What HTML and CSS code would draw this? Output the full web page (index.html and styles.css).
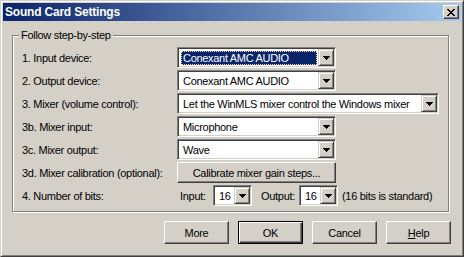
FILE: index.html
```html
<!DOCTYPE html>
<html lang="en">

<head>
    <meta charset="UTF-8">
    <title>Sound Card Settings</title>
    <link rel="stylesheet" href="styles.css">
</head>

<body>
    <div class="window">
        <!-- Caption -->
        <div class="titlebar">
            <span class="title">Sound Card Settings</span>
            <div class="close-btn">
                <svg width="8" height="7" viewBox="0 0 8 7" shape-rendering="crispEdges">
                    <path d="M0 0h2v1H0z M6 0h2v1H6z M1 1h2v1H1z M5 1h2v1H5z M2 2h4v1H2z M3 3h2v1H3z M2 4h4v1H2z M1 5h2v1H1z M5 5h2v1H5z M0 6h2v1H0z M6 6h2v1H6z" fill="#000" />
                </svg>
            </div>
        </div>

        <div class="client">
            <!-- Group box -->
            <div class="group">
                <span class="group-legend">Follow step-by-step</span>

                <div class="row">
                    <span class="label">1. Input device:</span>
                    <div class="combo combo-medium">
                        <span class="combo-text selected">Conexant AMC AUDIO</span>
                        <span class="drop"><svg width="7" height="4" viewBox="0 0 7 4" shape-rendering="crispEdges"><path d="M0 0h7v1H0z M1 1h5v1H1z M2 2h3v1H2z M3 3h1v1H3z" fill="#000" /></svg></span>
                    </div>
                </div>

                <div class="row">
                    <span class="label">2. Output device:</span>
                    <div class="combo combo-medium">
                        <span class="combo-text">Conexant AMC AUDIO</span>
                        <span class="drop"><svg width="7" height="4" viewBox="0 0 7 4" shape-rendering="crispEdges"><path d="M0 0h7v1H0z M1 1h5v1H1z M2 2h3v1H2z M3 3h1v1H3z" fill="#000" /></svg></span>
                    </div>
                </div>

                <div class="row">
                    <span class="label">3. Mixer (volume control):</span>
                    <div class="combo combo-long">
                        <span class="combo-text">Let the WinMLS mixer control the Windows mixer</span>
                        <span class="drop"><svg width="7" height="4" viewBox="0 0 7 4" shape-rendering="crispEdges"><path d="M0 0h7v1H0z M1 1h5v1H1z M2 2h3v1H2z M3 3h1v1H3z" fill="#000" /></svg></span>
                    </div>
                </div>

                <div class="row">
                    <span class="label">3b. Mixer input:</span>
                    <div class="combo combo-medium">
                        <span class="combo-text">Microphone</span>
                        <span class="drop"><svg width="7" height="4" viewBox="0 0 7 4" shape-rendering="crispEdges"><path d="M0 0h7v1H0z M1 1h5v1H1z M2 2h3v1H2z M3 3h1v1H3z" fill="#000" /></svg></span>
                    </div>
                </div>

                <div class="row">
                    <span class="label">3c. Mixer output:</span>
                    <div class="combo combo-medium">
                        <span class="combo-text">Wave</span>
                        <span class="drop"><svg width="7" height="4" viewBox="0 0 7 4" shape-rendering="crispEdges"><path d="M0 0h7v1H0z M1 1h5v1H1z M2 2h3v1H2z M3 3h1v1H3z" fill="#000" /></svg></span>
                    </div>
                </div>

                <div class="row">
                    <span class="label">3d. Mixer calibration (optional):</span>
                    <div class="btn btn-calibrate">Calibrate mixer gain steps...</div>
                </div>

                <div class="row">
                    <span class="label">4. Number of bits:</span>
                    <span class="bits-input">Input:</span>
                    <div class="combo combo-small">
                        <span class="combo-text">16</span>
                        <span class="drop"><svg width="7" height="4" viewBox="0 0 7 4" shape-rendering="crispEdges"><path d="M0 0h7v1H0z M1 1h5v1H1z M2 2h3v1H2z M3 3h1v1H3z" fill="#000" /></svg></span>
                    </div>
                    <span class="bits-output">Output:</span>
                    <div class="combo combo-small">
                        <span class="combo-text">16</span>
                        <span class="drop"><svg width="7" height="4" viewBox="0 0 7 4" shape-rendering="crispEdges"><path d="M0 0h7v1H0z M1 1h5v1H1z M2 2h3v1H2z M3 3h1v1H3z" fill="#000" /></svg></span>
                    </div>
                    <span class="bits-note">(16 bits is standard)</span>
                </div>
            </div>

            <!-- Dialog buttons -->
            <div class="buttons">
                <div class="btn">More</div>
                <div class="btn btn-default">OK</div>
                <div class="btn">Cancel</div>
                <div class="btn"><u>H</u>elp</div>
            </div>
        </div>
    </div>
</body>

</html>
```

FILE: styles.css
```css
/* General reset */
* {
    margin: 0;
    padding: 0;
    box-sizing: border-box;
}

body {
    font-family: "Liberation Sans", Arial, sans-serif;
    font-size: 11px;
    letter-spacing: -0.3px;
    color: #000;
    background: #d4d0c8;
}

/* Dialog frame */
.window {
    width: 464px;
    height: 257px;
    background: #d4d0c8;
    border: 1px solid;
    border-color: #d4d0c8 #404040 #404040 #d4d0c8;
    box-shadow: inset 1px 1px #fff, inset -1px -1px #808080;
    padding: 2px;
    display: flex;
    flex-direction: column;
}

/* Caption bar */
.titlebar {
    height: 18px;
    background: linear-gradient(to right, #0a246a, #a6caf0);
    display: flex;
    align-items: center;
    padding: 0 2px;
}

.title {
    color: #fff;
    font-weight: bold;
    font-size: 12px;
    letter-spacing: -0.2px;
}

.close-btn {
    margin-left: auto;
    width: 16px;
    height: 14px;
    background: #d4d0c8;
    border: 1px solid;
    border-color: #fff #404040 #404040 #fff;
    box-shadow: inset -1px -1px #808080;
    display: flex;
    align-items: center;
    justify-content: center;
    padding-right: 1px;
}

.close-btn svg {
    display: block;
}

/* Client area */
.client {
    flex: 1;
    padding: 14px 0 0 9px;
}

/* Etched group box */
.group {
    position: relative;
    width: 437px;
    height: 177px;
    border: 1px solid #808080;
    box-shadow: inset 1px 1px #fff, 1px 1px #fff;
    padding: 11px 0 0 9px;
}

.group-legend {
    position: absolute;
    top: -7px;
    left: 6px;
    padding: 0 2px;
    line-height: 13px;
    background: #d4d0c8;
}

.row {
    display: flex;
    align-items: center;
    height: 21px;
    margin-bottom: 2px;
}

.label {
    width: 155px;
    flex-shrink: 0;
}

/* Combo boxes */
.combo {
    height: 21px;
    background: #fff;
    border: 1px solid;
    border-color: #808080 #fff #fff #808080;
    box-shadow: inset 1px 1px #404040, inset -1px -1px #d4d0c8;
    padding: 1px;
    display: flex;
    flex-shrink: 0;
}

.combo-medium {
    width: 159px;
}

.combo-long {
    width: 262px;
}

.combo-small {
    width: 39px;
}

.combo-text {
    flex: 1;
    margin: 2px 1px 1px 2px;
    padding-left: 1px;
    line-height: 13px;
    white-space: nowrap;
    overflow: hidden;
    border: 1px solid transparent;
}

.combo-text.selected {
    background: #0a246a;
    color: #fff;
    border: 1px dotted #f5db95;
}

.drop {
    width: 16px;
    height: 17px;
    background: #d4d0c8;
    border: 1px solid;
    border-color: #d4d0c8 #404040 #404040 #d4d0c8;
    box-shadow: inset 1px 1px #fff, inset -1px -1px #808080;
    display: flex;
    align-items: center;
    justify-content: center;
}

.drop svg {
    display: block;
}

/* Bits row */
.bits-input {
    width: 33px;
    margin-left: 3px;
}

.bits-output {
    width: 38px;
    margin-left: 9px;
}

.bits-note {
    margin-left: 4px;
    white-space: nowrap;
}

/* Push buttons */
.btn {
    width: 65px;
    height: 23px;
    background: #d4d0c8;
    border: 1px solid;
    border-color: #fff #404040 #404040 #fff;
    box-shadow: inset -1px -1px #808080;
    display: flex;
    align-items: center;
    justify-content: center;
    white-space: nowrap;
}

.btn-calibrate {
    width: 159px;
    height: 21px;
}

.btn-default {
    border: 1px solid #000;
    box-shadow: inset 1px 1px #fff, inset -1px -1px #404040, inset -2px -2px #808080;
}

.buttons {
    display: flex;
    justify-content: flex-end;
    gap: 9px;
    margin-top: 9px;
    margin-right: 10px;
}
```
